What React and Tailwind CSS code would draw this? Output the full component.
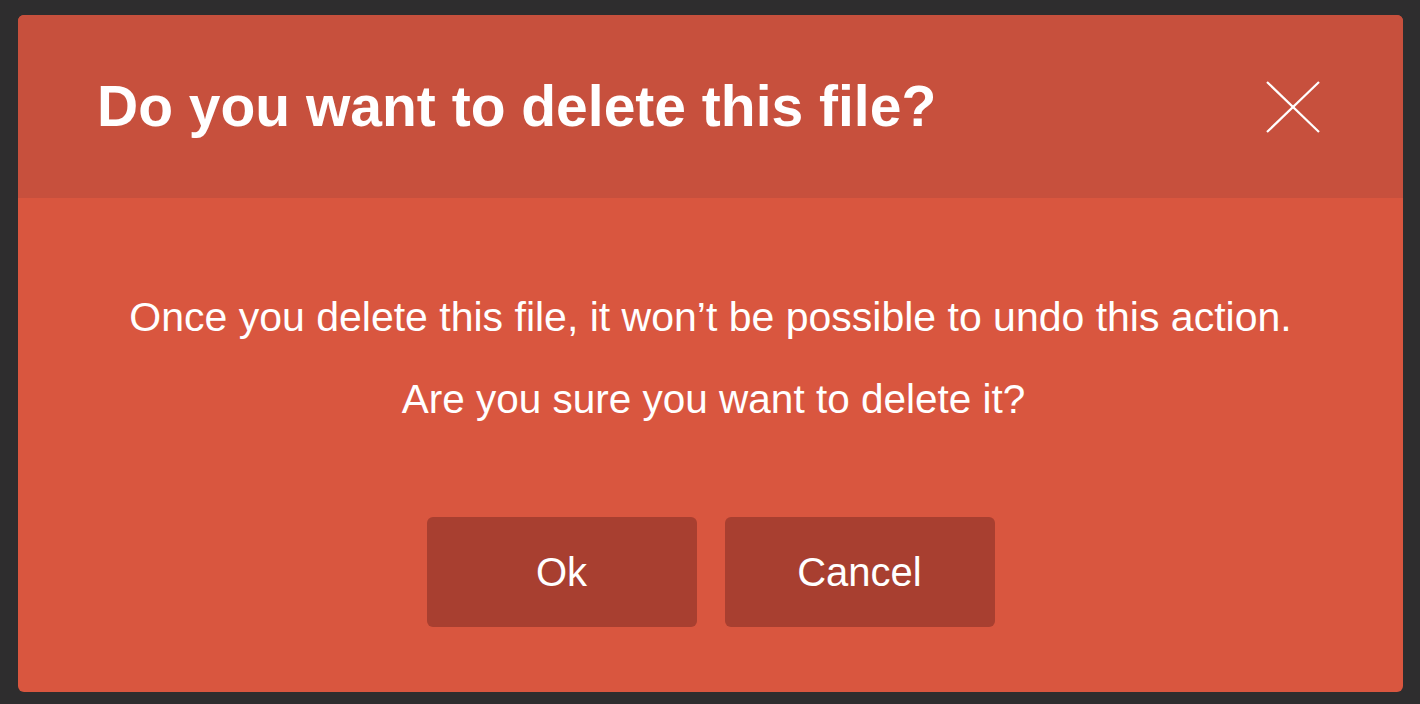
export default function App() {
  return (
    <div
      className="w-[1420px] h-[704px] bg-[#2e2d2e] pt-[15px] pl-[18px] pr-[17px] pb-[12px] flex"
      style={{ fontFamily: '"Liberation Sans", Arial, Helvetica, sans-serif' }}
    >
      <div className="flex-1 flex flex-col rounded-[6px] overflow-hidden bg-[#d9563f]">
        <div className="h-[183px] shrink-0 bg-[#c7503d] flex items-center justify-between pl-[79px] pr-[83px]">
          <h1 className="text-[57px] font-bold text-white leading-none">Do you want to delete this file?</h1>
          <button className="w-[54px] h-[52px] flex items-center justify-center" aria-label="Close">
            <svg width="54" height="52" viewBox="0 0 54 52" fill="none">
              <line x1="1" y1="1" x2="53" y2="51" stroke="white" strokeWidth="2.2" />
              <line x1="53" y1="1" x2="1" y2="51" stroke="white" strokeWidth="2.2" />
            </svg>
          </button>
        </div>
        <div className="flex-1 flex flex-col items-center pt-[78px]">
          <p className="text-[41px] leading-[82px] text-white text-center">
            Once you delete this file, it won’t be possible to undo this action.
          </p>
          <p className="text-[40.5px] leading-[82px] text-white text-center pl-[6px]">
            Are you sure you want to delete it?
          </p>
          <div className="flex gap-[28px] mt-[77px]">
            <button className="w-[270px] h-[110px] rounded-[6px] bg-[#a83f30] text-white text-[40px] flex items-center justify-center">
              Ok
            </button>
            <button className="w-[270px] h-[110px] rounded-[6px] bg-[#a83f30] text-white text-[40px] flex items-center justify-center">
              Cancel
            </button>
          </div>
        </div>
      </div>
    </div>
  );
}
